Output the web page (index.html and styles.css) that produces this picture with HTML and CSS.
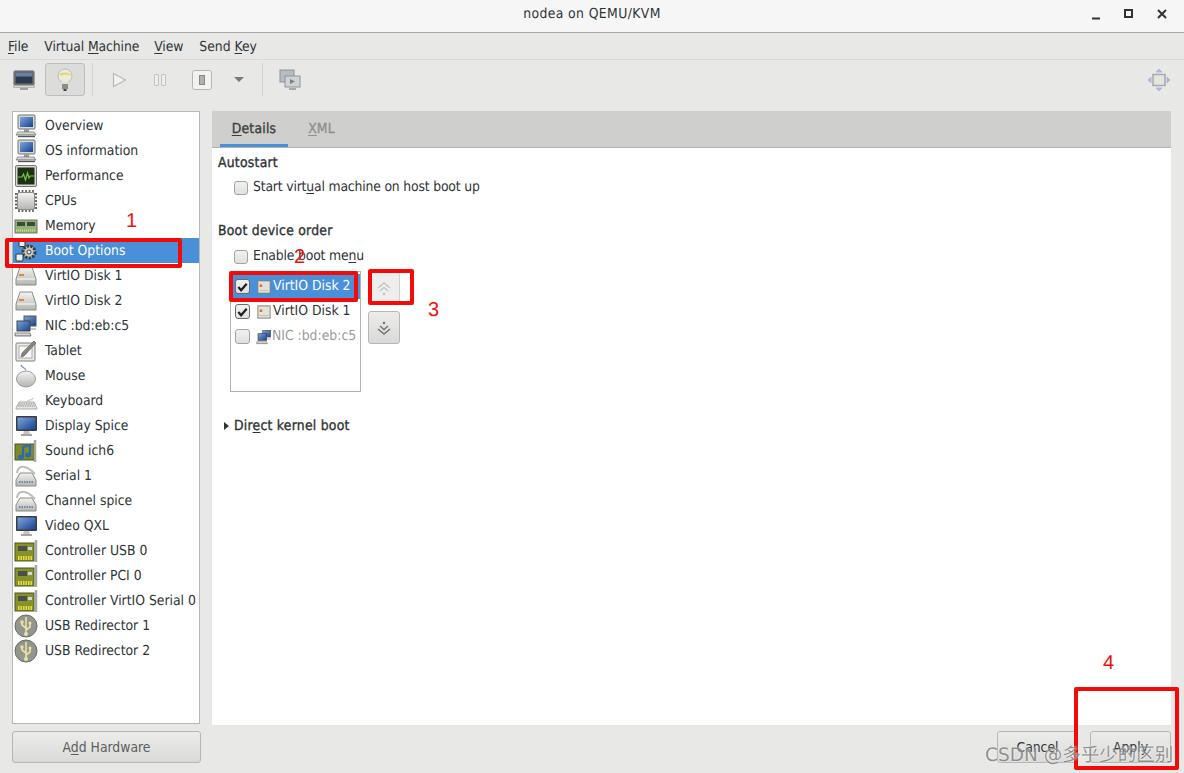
FILE: index.html
```html
<!DOCTYPE html>
<html lang="en">
<head>
<meta charset="utf-8">
<title>nodea on QEMU/KVM</title>
<link rel="stylesheet" href="styles.css">
</head>
<body>
<svg class="defs" width="0" height="0" aria-hidden="true">
  <defs>
    <linearGradient id="screen" x1="0" y1="0" x2="1" y2="1"><stop offset="0" stop-color="#7ea6dc"/><stop offset="1" stop-color="#16428f"/></linearGradient>
    <linearGradient id="metal" x1="0" y1="0" x2="0" y2="1"><stop offset="0" stop-color="#f4f4f2"/><stop offset="1" stop-color="#b4b6b2"/></linearGradient>
    <symbol id="i-host" viewBox="0 0 24 24">
      <rect x="4" y="1" width="17" height="14" rx="1" fill="#d6d8d4" stroke="#70746f"/>
      <rect x="6" y="3" width="13" height="10" fill="url(#screen)"/>
      <rect x="10" y="15" width="5" height="3" fill="#9a9c98"/>
      <path d="M4 18h16l2 3H2z" fill="url(#metal)" stroke="#70746f" stroke-width=".8"/>
      <path d="M4 22.500h17" stroke="#555" stroke-width="1.400"/>
    </symbol>
    <symbol id="i-perf" viewBox="0 0 24 24">
      <rect x="1.500" y="1.500" width="21" height="21" rx="1.500" fill="#d8d8d6" stroke="#777"/>
      <rect x="3.500" y="3.500" width="17" height="17" fill="#1d3014"/>
      <path d="M4 13h4l1.500-3 2 6 2-7 1.500 5 1-2h4" fill="none" stroke="#6ecb3c" stroke-width="1.200"/>
    </symbol>
    <symbol id="i-cpu" viewBox="0 0 24 24">
      <path d="M1 5h22M1 8.500h22M1 12h22M1 15.500h22M1 19h22M5 1v22M8.500 1v22M12 1v22M15.500 1v22M19 1v22" stroke="#6a6c68" stroke-width="1.800"/>
      <rect x="3.500" y="3.500" width="17" height="17" rx="2" fill="url(#metal)" stroke="#8a8c88"/>
    </symbol>
    <symbol id="i-mem" viewBox="0 0 24 24">
      <rect x="1" y="6" width="22" height="13" fill="#8fb27b" stroke="#6d7a66"/>
      <rect x="3" y="8" width="8" height="4" fill="#3d4a3a"/><rect x="13" y="8" width="8" height="4" fill="#3d4a3a"/>
      <path d="M2 16.500h20" stroke="#e3d778" stroke-width="2" stroke-dasharray="1 1"/>
    </symbol>
    <symbol id="i-gear" viewBox="0 0 24 24">
      <circle cx="15" cy="13" r="6" fill="#c8c8c4" stroke="#3a3d3a" stroke-width="3" stroke-dasharray="2.400 1.200"/>
      <circle cx="15" cy="13" r="2" fill="#eee" stroke="#444"/>
      <rect x="5" y="1.500" width="6" height="6" rx="1" fill="#eee" stroke="#333"/>
      <rect x="2" y="15" width="7" height="7" rx="1" fill="#eee" stroke="#333"/>
    </symbol>
    <symbol id="i-disk" viewBox="0 0 24 24">
      <path d="M6 3h12l4 12v6H2v-6z" fill="url(#metal)" stroke="#8c8e8a"/>
      <path d="M3 15h18" stroke="#fff"/>
      <rect x="5" y="10" width="5" height="2" fill="#dd8a3c"/>
    </symbol>
    <symbol id="i-nic" viewBox="0 0 24 24">
      <rect x="10" y="2" width="12" height="10" fill="url(#screen)" stroke="#555"/>
      <rect x="3" y="7" width="13" height="10" fill="url(#screen)" stroke="#444"/>
      <path d="M1 19h15l1 3H1z" fill="url(#metal)" stroke="#666" stroke-width=".8"/>
      <path d="M16 15h6" stroke="#888"/>
    </symbol>
    <symbol id="i-tablet" viewBox="0 0 24 24">
      <rect x="2" y="4" width="19" height="18" rx="1" fill="#e8e8e6" stroke="#80827e"/>
      <rect x="5" y="7" width="13" height="12" fill="#fbfbfa" stroke="#aaa"/>
      <path d="M7 18l1-4L20 2l2 2L10 17z" fill="#85867f" stroke="#555" stroke-width=".6"/>
    </symbol>
    <symbol id="i-mouse" viewBox="0 0 24 24">
      <path d="M7 1c1 3 3 2 5 5" fill="none" stroke="#6f93c4" stroke-width="1.200"/>
      <ellipse cx="12" cy="15" rx="9.500" ry="8" fill="url(#metal)" stroke="#9a9c98"/>
    </symbol>
    <symbol id="i-kbd" viewBox="0 0 24 24">
      <path d="M5 13h15l3 6v1H2v-1z" fill="#e6e6e3" stroke="#9a9c98" stroke-width=".8"/>
      <path d="M5 15h15M4 17h17" stroke="#8a8c88" stroke-dasharray="1.500 .8"/>
      <path d="M13 13c0-3 6-1 6-4" fill="none" stroke="#bbb"/>
    </symbol>
    <symbol id="i-display" viewBox="0 0 24 24">
      <rect x="2" y="2" width="21" height="15" rx="1" fill="#3a3d3c"/>
      <rect x="3.500" y="3.500" width="18" height="12" fill="url(#screen)"/>
      <path d="M10 17h5l1 3H9z" fill="#c4c5c1"/><path d="M7 21h11" stroke="#888" stroke-width="1.500"/>
    </symbol>
    <symbol id="i-sound" viewBox="0 0 24 24">
      <rect x="1" y="5" width="19" height="16" fill="#7c8a2a" stroke="#4d5522"/>
      <path d="M21 1v22" stroke="#a7a9a5" stroke-width="2.500"/>
      <path d="M9 18V8l7-2v10" fill="none" stroke="#2a69b8" stroke-width="2"/>
      <ellipse cx="7" cy="18" rx="3" ry="2.200" fill="#2a69b8"/><ellipse cx="14" cy="16" rx="3" ry="2.200" fill="#2a69b8"/>
    </symbol>
    <symbol id="i-serial" viewBox="0 0 24 24">
      <path d="M3 9c1-8 9-9 18 1" fill="none" stroke="#bcbdb9" stroke-width="2"/>
      <path d="M6 9h12l4 7v6H2v-6z" fill="url(#metal)" stroke="#8a8c88"/>
      <path d="M5 18h14" stroke="#7289a8" stroke-width="2" stroke-dasharray="1.500 1"/>
    </symbol>
    <symbol id="i-ctrl" viewBox="0 0 24 24">
      <rect x="1" y="4" width="19" height="18" fill="#87932a" stroke="#4d5522"/>
      <rect x="4" y="7" width="9" height="5" fill="#4a4f4a"/><rect x="14" y="8" width="4" height="3" fill="#cfd9e0"/>
      <path d="M4 19h14" stroke="#e8dc3c" stroke-width="4" stroke-dasharray="1.500 1"/>
      <path d="M22 1v22" stroke="#a7a9a5" stroke-width="2.500"/>
    </symbol>
    <symbol id="i-usb" viewBox="0 0 24 24">
      <circle cx="12" cy="12" r="11" fill="#93958f" stroke="#6b6d69"/>
      <path d="M12 3v17M12 14l-4-3V9M12 16l4-3v-3" fill="none" stroke="#ece3a0" stroke-width="1.600"/>
      <circle cx="12" cy="20" r="2" fill="#ece3a0"/><rect x="6.500" y="6.500" width="3" height="3" fill="#ece3a0"/><circle cx="16" cy="9" r="1.500" fill="#ece3a0"/>
    </symbol>
    <symbol id="i-order" viewBox="0 0 16 16">
      <rect x="1" y="1" width="14" height="14" fill="#e4e2d8" stroke="#777"/>
      <rect x="3" y="5" width="3" height="3" fill="#d9772b"/>
      <path d="M3 12h10" stroke="#bbb"/>
    </symbol>
  </defs>
</svg>

<div class="window">
  <header class="titlebar">
    <span class="title">nodea on QEMU/KVM</span>
    <span class="wm">
      <svg width="12" height="12" viewBox="0 0 12 12"><path d="M2 10.500h8" stroke="#2e3436" stroke-width="2"/></svg>
      <svg width="12" height="12" viewBox="0 0 12 12"><rect x="2" y="2" width="7" height="7" fill="none" stroke="#2e3436" stroke-width="2"/></svg>
      <svg width="12" height="12" viewBox="0 0 12 12"><path d="M2 2l8 8M10 2l-8 8" stroke="#2e3436" stroke-width="2"/></svg>
    </span>
  </header>

  <nav class="menubar">
    <span class="menu-file"><u>F</u>ile</span>
    <span>Virtual <u>M</u>achine</span>
    <span><u>V</u>iew</span>
    <span class="menu-send">Send <u>K</u>ey</span>
  </nav>

  <div class="toolbar">
    <span class="tool tool-first">
      <svg width="24" height="24" viewBox="0 0 24 24"><rect x="2" y="3" width="20" height="14" rx="1" fill="#7d8084" stroke="#5c5f62"/><rect x="3.500" y="4.500" width="17" height="11" fill="#2a3850"/><path d="M3.500 4.500h17v4h-17z" fill="#6c7f9a"/><path d="M1.500 17.500h21v2h-21z" fill="#d4d6d2" stroke="#9a9c9a" stroke-width=".6"/><path d="M8 21h8" stroke="#888" stroke-width="1.500"/></svg>
    </span>
    <span class="tool tool-on">
      <svg width="24" height="26" viewBox="0 0 24 26"><circle cx="12" cy="9" r="7" fill="#ecebd8" stroke="#bcbdb6"/><path d="M7 8c2-2 8-2 10 0" fill="none" stroke="#e4d36c" stroke-width="2"/><rect x="9" y="15" width="6" height="2" fill="#e0e0da"/><rect x="9" y="17" width="6" height="5" fill="#8a8c88"/><rect x="10.500" y="22" width="3" height="2" fill="#444"/></svg>
    </span>
    <span class="sep sep-a"></span>
    <span class="tool tool-play">
      <svg width="16" height="16" viewBox="0 0 16 16"><path d="M2.500 1.500L14.500 8 2.500 14.500z" fill="#f2f2f1" stroke="#b8bab8" stroke-width="1.200"/></svg>
    </span>
    <span class="tool tool-pause">
      <svg width="14" height="14" viewBox="0 0 14 14"><rect x="1.500" y="1.500" width="4" height="11" rx=".5" fill="#eeeeed" stroke="#c2c4c2"/><rect x="8.500" y="1.500" width="4" height="11" rx=".5" fill="#eeeeed" stroke="#c2c4c2"/></svg>
    </span>
    <span class="tool tool-stop">
      <svg width="20" height="20" viewBox="0 0 20 20"><rect x=".5" y=".5" width="19" height="19" rx="2" fill="#f2f2f1" stroke="#b5b7b5"/><rect x="7.500" y="5.500" width="5" height="9" fill="#b0b2b0" stroke="#858785"/></svg>
    </span>
    <span class="caret"></span>
    <span class="sep sep-b"></span>
    <span class="tool tool-shots">
      <svg width="22" height="22" viewBox="0 0 22 22"><rect x="1" y="1" width="14" height="12" fill="#b6bcc4" stroke="#8e9296"/><rect x="6" y="7" width="15" height="11" fill="#cfd3d6" stroke="#8e9296"/><path d="M11 10l5 2.500-5 2.500z" fill="#7c8084"/><path d="M10 20h7" stroke="#a8aaa8" stroke-width="2"/></svg>
    </span>
    <span class="tool tool-full">
      <svg width="24" height="24" viewBox="0 0 24 24"><rect x="6" y="6.500" width="12" height="11" fill="#e4e4e2" stroke="#a6a8a8" stroke-width="1.500"/><path d="M9 4l3-3 3 3zM9 20l3 3 3-3zM4 9l-3 3 3 3zM20 9l3 3-3 3z" fill="#a9bcdb" stroke="#a9bcdb"/></svg>
    </span>
  </div>

  <main class="workspace">
    <aside class="sidebar">
      <ul class="devices">
        <li><svg class="ico"><use href="#i-host"/></svg><span>Overview</span></li>
        <li><svg class="ico"><use href="#i-host"/></svg><span>OS information</span></li>
        <li><svg class="ico"><use href="#i-perf"/></svg><span>Performance</span></li>
        <li><svg class="ico"><use href="#i-cpu"/></svg><span>CPUs</span></li>
        <li><svg class="ico"><use href="#i-mem"/></svg><span>Memory</span></li>
        <li class="sel"><svg class="ico"><use href="#i-gear"/></svg><span>Boot Options</span></li>
        <li><svg class="ico"><use href="#i-disk"/></svg><span>VirtIO Disk 1</span></li>
        <li><svg class="ico"><use href="#i-disk"/></svg><span>VirtIO Disk 2</span></li>
        <li><svg class="ico"><use href="#i-nic"/></svg><span>NIC :bd:eb:c5</span></li>
        <li><svg class="ico"><use href="#i-tablet"/></svg><span>Tablet</span></li>
        <li><svg class="ico"><use href="#i-mouse"/></svg><span>Mouse</span></li>
        <li><svg class="ico"><use href="#i-kbd"/></svg><span>Keyboard</span></li>
        <li><svg class="ico"><use href="#i-display"/></svg><span>Display Spice</span></li>
        <li><svg class="ico"><use href="#i-sound"/></svg><span>Sound ich6</span></li>
        <li><svg class="ico"><use href="#i-serial"/></svg><span>Serial 1</span></li>
        <li><svg class="ico"><use href="#i-serial"/></svg><span>Channel spice</span></li>
        <li><svg class="ico"><use href="#i-display"/></svg><span>Video QXL</span></li>
        <li><svg class="ico"><use href="#i-ctrl"/></svg><span>Controller USB 0</span></li>
        <li><svg class="ico"><use href="#i-ctrl"/></svg><span>Controller PCI 0</span></li>
        <li><svg class="ico"><use href="#i-ctrl"/></svg><span>Controller VirtIO Serial 0</span></li>
        <li><svg class="ico"><use href="#i-usb"/></svg><span>USB Redirector 1</span></li>
        <li><svg class="ico"><use href="#i-usb"/></svg><span>USB Redirector 2</span></li>
      </ul>
      <button class="btn btn-add" type="button">A<u>d</u>d Hardware</button>
    </aside>

    <section class="panel">
      <div class="notebook">
        <div class="tabs">
          <span class="tab tab-on"><u>D</u>etails</span>
          <span class="tab tab-off"><u>X</u>ML</span>
        </div>
        <div class="pane">
          <h3 class="head">Autostart</h3>
          <label class="check-row"><span class="box"></span><span>Start virt<u>u</u>al machine on host boot up</span></label>
          <h3 class="head head-boot">Boot device order</h3>
          <label class="check-row check-row-menu"><span class="box"></span><span>Enable boot me<u>n</u>u</span></label>
          <div class="boot">
            <ul class="order">
              <li class="order-sel"><span class="box on"><svg width="14" height="14" viewBox="0 0 14 14"><path d="M2.500 7l3 3.500 6-7" fill="none" stroke="#1d2022" stroke-width="2.400"/></svg></span><svg class="mini"><use href="#i-order"/></svg><span>VirtIO Disk 2</span></li>
              <li><span class="box on"><svg width="14" height="14" viewBox="0 0 14 14"><path d="M2.500 7l3 3.500 6-7" fill="none" stroke="#1d2022" stroke-width="2.400"/></svg></span><svg class="mini"><use href="#i-order"/></svg><span>VirtIO Disk 1</span></li>
              <li class="order-off"><span class="box"></span><svg class="mini-nic"><use href="#i-nic"/></svg><span>NIC :bd:eb:c5</span></li>
            </ul>
            <div class="arrows">
              <button class="arrow arrow-off" type="button"><svg width="18" height="18" viewBox="0 0 18 18"><path d="M3 8l6-5 6 5M5 11l4-3.500 4 3.500" fill="none" stroke="#c4c5c3" stroke-width="1.500"/><circle cx="9" cy="14" r="1.300" fill="#c4c5c3"/></svg></button>
              <button class="arrow" type="button"><svg width="18" height="18" viewBox="0 0 18 18"><path d="M3 10l6 5 6-5M5 7l4 3.500L13 7" fill="none" stroke="#73766f" stroke-width="1.500"/><circle cx="9" cy="4" r="1.300" fill="#73766f"/></svg></button>
            </div>
          </div>
          <div class="expander"><span class="tri"></span><span>Dir<u>e</u>ct kernel boot</span></div>
        </div>
      </div>
      <div class="actions">
        <button class="btn btn-act" type="button">Cancel</button>
        <button class="btn btn-act" type="button">Apply</button>
      </div>
    </section>
  </main>

  <i class="mark mark-1"></i>
  <i class="mark mark-2"></i>
  <i class="mark mark-3"></i>
  <i class="mark mark-4"></i>
  <span class="num num-1">1</span>
  <span class="num num-2">2</span>
  <span class="num num-3">3</span>
  <span class="num num-4">4</span>
  <span class="watermark">CSDN @多乎少的区别</span>
</div>
</body>
</html>
```
FILE: styles.css
```css
* { box-sizing: border-box; }
html, body { margin: 0; padding: 0; }
body {
  width: 1184px;
  height: 773px;
  overflow: hidden;
  background: #e8e8e7;
  color: #2e3436;
  font-family: "DejaVu Sans Condensed", "DejaVu Sans", sans-serif;
  font-stretch: condensed;
  font-size: 13.800px;
  text-rendering: geometricPrecision;
}
.defs { position: absolute; }
.window { position: relative; width: 1184px; height: 773px; display: flex; flex-direction: column; }
u { text-underline-offset: 2px; text-decoration-thickness: 1px; }

.titlebar {
  height: 33px;
  flex: none;
  position: relative;
  display: flex;
  align-items: center;
  justify-content: center;
  padding-bottom: 4px;
  background: #f6f6f6;
  border-bottom: 1px solid #a9aaa8;
}
.title { color: #2e3436; letter-spacing: .4px; }
.wm { position: absolute; right: 16px; top: 8px; display: flex; gap: 21px; }

.menubar {
  height: 27px;
  flex: none;
  display: flex;
  align-items: center;
  gap: 15px;
  padding: 1px 0 0 8px;
  border-bottom: 1px solid #d8d8d6;
  white-space: nowrap;
  letter-spacing: -.1px;
}
.menu-file { margin-right: 1px; }
.menu-send { margin-left: 1px; letter-spacing: 0; }

.toolbar { height: 50px; flex: none; display: flex; align-items: flex-start; padding: 3px 0 0 12px; }
.tool { display: flex; align-items: center; justify-content: center; height: 33px; }
.tool-first { width: 24px; margin-right: 9px; }
.tool-on { width: 40px; background: #dcdcda; border: 1px solid #bdbdbb; border-radius: 3px; }
.sep { width: 1px; height: 33px; background: #d2d2d0; }
.sep-a { margin-left: 7px; }
.tool-play { width: 16px; margin-left: 18px; }
.tool-pause { width: 14px; margin-left: 26px; }
.tool-stop { width: 20px; margin-left: 25px; }
.caret { width: 0; height: 0; margin: 14px 0 0 22px; border: 5px solid transparent; border-top: 5px solid #777a78; border-bottom: 0; }
.sep-b { margin-left: 18px; }
.tool-shots { width: 22px; margin-left: 16px; }
.tool-full { width: 24px; margin-left: auto; margin-right: 13px; }

.workspace { flex: 1; display: flex; gap: 12px; padding: 1px 13px 0 12px; min-height: 0; }
.sidebar { width: 188px; flex: none; display: flex; flex-direction: column; }
.devices {
  list-style: none;
  margin: 0;
  padding: 1px 0 0;
  height: 613px;
  background: #fff;
  border: 1px solid #b8b9b6;
  overflow: hidden;
}
.devices li { height: 25px; display: flex; align-items: center; padding-left: 1px; white-space: nowrap; }
.devices .sel { background: #4a90d9; color: #fff; margin: 0 -1px 0 0; }
.ico { width: 24px; height: 24px; flex: none; margin-right: 7px; }

.btn {
  font: inherit;
  font-stretch: condensed;
  color: #2e3436;
  height: 32px;
  padding: 0;
  background: linear-gradient(#ececeb, #dadad8);
  border: 1px solid #b6b7b4;
  border-radius: 3px;
}
.btn-add { margin-top: 7px; width: 189px; color: #5a5f5f; }

.panel { flex: 1; display: flex; flex-direction: column; min-width: 0; }
.notebook { height: 614px; background: #fff; display: flex; flex-direction: column; }
.tabs { height: 37px; flex: none; display: flex; background: #cfcfcd; border-bottom: 1px solid #b2b2b0; padding-left: 8px; }
.tab { display: flex; align-items: center; justify-content: center; width: 68px; height: 36px; -webkit-text-stroke: .35px currentColor; letter-spacing: .2px; }
.tab-on { border-bottom: 3px solid #4a90d9; padding-top: 3px; color: #3a3f40; }
.tab-off { color: #8f918f; margin-left: 8px; width: 51px; }
.pane { padding: 5px 0 0 6px; }
.head { margin: 0; font-size: 13.800px; line-height: 20px; font-weight: normal; -webkit-text-stroke: .35px currentColor; letter-spacing: .25px; }
.head-boot { margin-top: 21px; }
.check-row { display: flex; align-items: center; height: 25px; margin-top: 2px; padding-left: 16px; letter-spacing: -.17px; }
.check-row span:last-child { padding-bottom: 2px; }
.check-row-menu { margin-top: 3px; }
.box {
  width: 14px;
  height: 14px;
  flex: none;
  display: inline-flex;
  margin-right: 5px;
  background: linear-gradient(#f1f1f0, #e0e0de);
  border: 1px solid #a3a4a2;
  border-radius: 3px;
}
.boot { display: flex; gap: 7px; margin: 2px 0 0 12px; }
.order {
  list-style: none;
  margin: 0;
  padding: 2px 0 0;
  width: 131px;
  height: 121px;
  border: 1px solid #b2b3b0;
  background: #fff;
}
.order li { height: 25px; display: flex; align-items: center; padding-left: 4px; white-space: nowrap; }
.order li > span:last-child { padding-bottom: 2px; }
.order .box { width: 15px; height: 15px; margin-right: 7px; }
.order .on { border-color: #6a6c6a; }
.order-sel { background: #4a90d9; color: #fff; }
.order-off { color: #9a9c9a; }
.mini { width: 14px; height: 14px; flex: none; margin-right: 2px; }
.mini-nic { width: 16px; height: 16px; flex: none; margin-left: -1px; }
.arrows { display: flex; flex-direction: column; gap: 6px; padding-top: 1px; }
.arrow {
  width: 32px;
  height: 33px;
  padding: 0;
  display: flex;
  align-items: center;
  justify-content: center;
  background: linear-gradient(#ececeb, #d9d9d7);
  border: 1px solid #b6b7b4;
  border-radius: 3px;
}
.arrow-off { background: #eeeeed; border-color: #d0d0ce; }
.expander { display: flex; align-items: center; height: 20px; margin-top: 24px; padding-left: 6px; -webkit-text-stroke: .35px currentColor; letter-spacing: .25px; }
.tri { width: 0; height: 0; margin-right: 5px; border-left: 5px solid #2e3436; border-top: 4px solid transparent; border-bottom: 4px solid transparent; }

.actions { display: flex; justify-content: flex-end; gap: 12px; margin-top: 6px; }
.btn-act { width: 81px; }

.mark { position: absolute; border: 4px solid #f50a0a; border-radius: 2px; pointer-events: none; }
.mark-1 { left: 5px; top: 238px; width: 177px; height: 30px; }
.mark-2 { left: 229px; top: 271px; width: 129px; height: 31px; }
.mark-3 { left: 368px; top: 269px; width: 46px; height: 36px; }
.mark-4 { left: 1074px; top: 687px; width: 105px; height: 83px; }
.num { position: absolute; font-family: "Liberation Sans", sans-serif; font-stretch: normal; font-size: 20px; line-height: 20px; color: #f01010; }
.num-1 { left: 126px; top: 211px; }
.num-2 { left: 294px; top: 247px; }
.num-3 { left: 428px; top: 300px; }
.num-4 { left: 1103px; top: 653px; }
.watermark {
  position: absolute;
  left: 985px;
  top: 745px;
  font-family: "DejaVu Sans", "Noto Sans CJK SC", sans-serif;
  font-stretch: normal;
  font-size: 18.500px;
  line-height: 22px;
  white-space: nowrap;
  color: rgba(110, 110, 110, .75);
  text-shadow: 0 0 2px #fff;
}
```
